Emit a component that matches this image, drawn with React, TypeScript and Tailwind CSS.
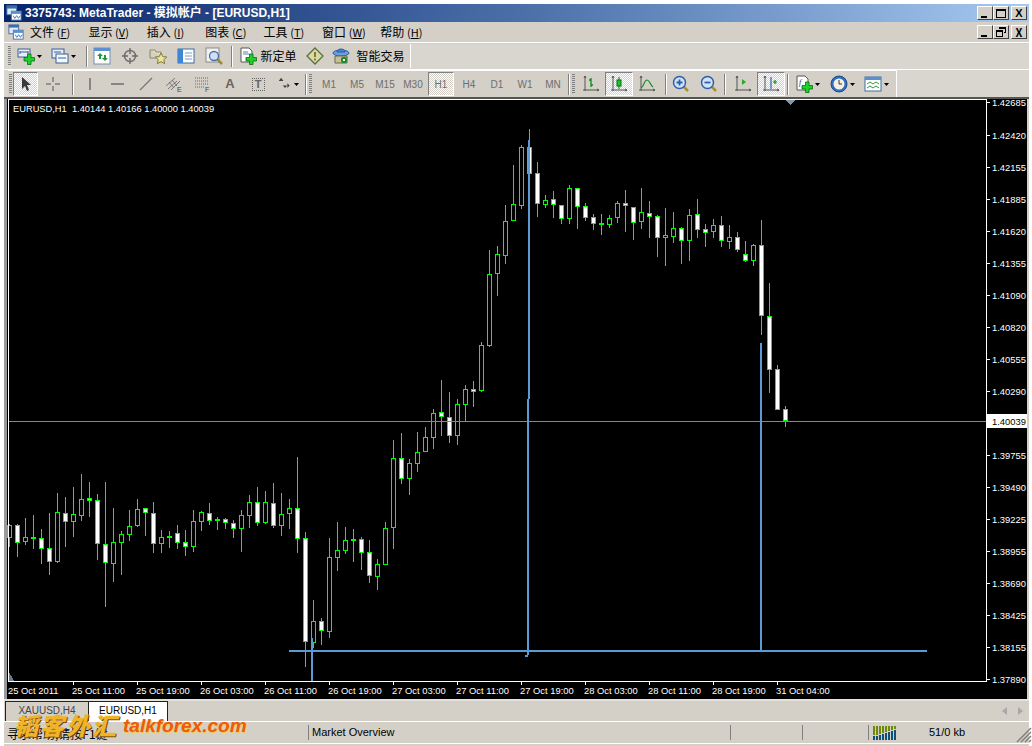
import React from 'react';

// high, body top, body bottom, low, white body
type Candle = [number, number, number, number, number];

const candles: Candle[] = [
  [524, 525, 538, 547, 0], [524, 525, 543, 557, 1], [518, 537, 542, 545, 0], [515, 537, 539, 549, 1],
  [529, 538, 549, 564, 1], [513, 548, 562, 575, 1], [493, 512, 562, 563, 0], [497, 513, 522, 547, 1],
  [487, 514, 522, 537, 0], [474, 499, 516, 521, 0], [482, 498, 501, 517, 1], [494, 500, 544, 560, 1],
  [482, 544, 563, 607, 1], [508, 542, 564, 582, 0], [531, 534, 543, 575, 0], [510, 526, 535, 541, 0],
  [499, 509, 526, 527, 0], [508, 508, 513, 536, 1], [502, 513, 544, 553, 1], [530, 537, 544, 553, 0],
  [531, 536, 537, 548, 1], [525, 533, 543, 549, 1], [530, 542, 547, 556, 1], [510, 521, 547, 552, 0],
  [511, 512, 522, 531, 0], [503, 513, 521, 525, 1], [517, 519, 521, 530, 1], [518, 519, 523, 529, 1],
  [520, 523, 529, 538, 1], [510, 515, 529, 552, 0], [495, 502, 516, 528, 0], [487, 502, 523, 526, 1],
  [491, 502, 523, 524, 0], [483, 503, 526, 528, 1], [493, 514, 526, 536, 0], [499, 508, 514, 529, 0],
  [457, 508, 539, 553, 1], [532, 538, 642, 667, 1], [600, 621, 643, 648, 0], [618, 621, 631, 645, 1],
  [538, 557, 632, 638, 0], [522, 550, 558, 571, 0], [527, 540, 551, 554, 0], [529, 539, 541, 562, 1],
  [537, 539, 553, 570, 1], [540, 552, 576, 583, 1], [559, 564, 577, 590, 0], [522, 528, 565, 565, 0],
  [440, 458, 528, 549, 0], [433, 458, 479, 484, 1], [459, 463, 479, 495, 0], [432, 452, 464, 472, 0],
  [427, 437, 452, 452, 0], [409, 413, 438, 449, 0], [380, 412, 417, 436, 1], [392, 417, 436, 443, 1],
  [399, 404, 436, 445, 0], [385, 389, 405, 421, 0], [381, 389, 392, 407, 1], [342, 345, 391, 392, 0],
  [250, 274, 346, 347, 0], [246, 254, 274, 296, 0], [205, 221, 256, 264, 0], [165, 204, 221, 221, 0],
  [145, 147, 206, 209, 0], [129, 147, 174, 174, 1], [162, 173, 204, 217, 1], [195, 200, 205, 208, 0],
  [191, 199, 205, 218, 1], [205, 205, 219, 224, 1], [185, 188, 219, 224, 0], [188, 188, 207, 229, 1],
  [203, 206, 218, 221, 1], [214, 217, 224, 230, 1], [214, 223, 225, 235, 1], [215, 218, 225, 228, 0],
  [201, 203, 218, 223, 0], [190, 203, 206, 232, 1], [207, 207, 223, 240, 1], [188, 212, 222, 229, 0],
  [201, 213, 217, 238, 1], [215, 216, 238, 257, 1], [208, 235, 238, 266, 0], [212, 228, 237, 243, 0],
  [227, 228, 241, 264, 1], [209, 215, 241, 261, 0], [199, 214, 230, 238, 1], [224, 229, 233, 247, 1],
  [219, 225, 232, 238, 0], [216, 225, 241, 247, 1], [225, 237, 242, 249, 0], [232, 237, 250, 252, 1],
  [241, 254, 261, 262, 1], [244, 245, 261, 266, 0], [220, 245, 316, 335, 1], [283, 316, 370, 393, 1],
  [365, 369, 410, 410, 1], [406, 409, 421, 427, 1],
];

const prices: [string, number][] = [
  ['1.42685', 102], ['1.42420', 135], ['1.42155', 167], ['1.41885', 199], ['1.41620', 231], ['1.41355', 263],
  ['1.41090', 295], ['1.40820', 327], ['1.40555', 359], ['1.40290', 391], ['1.39755', 455], ['1.39490', 487],
  ['1.39225', 519], ['1.38955', 551], ['1.38690', 583], ['1.38425', 615], ['1.38155', 647], ['1.37890', 679],
];

const times = [
  '25 Oct 2011', '25 Oct 11:00', '25 Oct 19:00', '26 Oct 03:00', '26 Oct 11:00', '26 Oct 19:00', '27 Oct 03:00',
  '27 Oct 11:00', '27 Oct 19:00', '28 Oct 03:00', '28 Oct 11:00', '28 Oct 19:00', '31 Oct 04:00',
];

const menus = [
  ['文件', 'F'], ['显示', 'V'], ['插入', 'I'], ['图表', 'C'], ['工具', 'T'], ['窗口', 'W'], ['帮助', 'H'],
];

const GREEN = '#00ff00';
const BLUE = '#5b9bd5';

const Ico: React.FC<{ children: React.ReactNode; size?: number }> = ({ children, size = 18 }) => (
  <svg width={size} height={size} viewBox="0 0 18 18" fill="none" className="shrink-0">
    {children}
  </svg>
);

const Caret = () => (
  <svg width="5" height="3" viewBox="0 0 5 3" className="ml-[2px] shrink-0">
    <path d="M0 0h5L2.5 3z" fill="#000" />
  </svg>
);

const Plus = ({ x = 7, y = 7 }: { x?: number; y?: number }) => (
  <path
    d={`M${x + 3.5} ${y}h3.5v3.500h3.500v3.500h-3.500v3.500h-3.500v-3.500h-3.500v-3.500h3.500z`}
    fill="#1fd02a"
    stroke="#0b6b12"
    strokeWidth="0.8"
  />
);

const Grip = () => (
  <div className="mx-[1px] h-[20px] w-[3px] shrink-0 bg-[repeating-linear-gradient(to_bottom,#808080_0,#808080_1px,transparent_1px,transparent_2px)]" />
);

const Sep = ({ className = '' }: { className?: string }) => (
  <div className={`h-[21px] w-[2px] shrink-0 border-l border-r border-l-[#808080] border-r-white ${className}`} />
);

const Btn: React.FC<{ w: string; pressed?: boolean; children: React.ReactNode }> = ({ w, pressed, children }) => (
  <div
    className={`flex h-[24px] shrink-0 items-center justify-center ${w} ${
      pressed
        ? 'border border-t-[#808080] border-l-[#808080] border-r-white border-b-white bg-[repeating-conic-gradient(#ffffff_0_25%,#d4d0c8_0_50%)] bg-size-[2px_2px]'
        : ''
    }`}
  >
    {children}
  </div>
);

const WinBtn: React.FC<{ children: React.ReactNode }> = ({ children }) => (
  <div className="flex h-[14px] w-[16px] items-center justify-center border border-t-white border-l-white border-r-[#404040] border-b-[#404040] bg-[#d4d0c8]">
    {children}
  </div>
);

const MtLogo = () => (
  <Ico size={16}>
    <rect x="1" y="1" width="11" height="10" fill="#dfeafa" stroke="#3a6ea5" />
    <rect x="1" y="1" width="11" height="3" fill="#3a6ea5" />
    <rect x="6" y="7" width="11" height="10" fill="#fff" stroke="#3a6ea5" />
    <rect x="6" y="7" width="11" height="3" fill="#5c8fd0" />
    <path d="M8 12l2 3 2-3 2 3 2-3" stroke="#3a6ea5" />
  </Ico>
);

const Axes = ({ children }: { children?: React.ReactNode }) => (
  <Ico>
    <path d="M3 1v15M1 15h16M3 1l-1 2M3 1l1 2M17 15l-2-1M17 15l-2 1" stroke="#555" />
    {children}
  </Ico>
);

const Lens = ({ minus }: { minus?: boolean }) => (
  <Ico>
    <path d="M11 11l5 5" stroke="#a89030" strokeWidth="2.5" />
    <circle cx="7.5" cy="7.5" r="6" fill="#cfe2f8" stroke="#2f5fa8" strokeWidth="1.5" />
    <path d={minus ? 'M4.5 7.5h6' : 'M4.5 7.5h6M7.5 4.5v6'} stroke="#2f5fa8" strokeWidth="1.8" />
  </Ico>
);

const label = 'text-[10px] text-[#6e6e6e]';
const chartFont = "'Liberation Sans', sans-serif";

const Chart = () => (
  <svg width="1025" height="600" viewBox="4 99 1025 600" className="block shrink-0" shapeRendering="crispEdges">
    <rect x="4" y="99" width="1023" height="600" fill="#000" />
    <rect x="4" y="99" width="3" height="600" fill="#9a9a9a" />
    <rect x="1027" y="99" width="2" height="600" fill="#d4d0c8" />
    {candles.map(([h, t, b, l, white], i) => {
      const x = 9 + 8 * i;
      return (
        <g key={i}>
          <rect x={x} y={h} width="1" height={l - h} fill={GREEN} />
          <rect x={x - 2} y={t} width="5" height={Math.max(b - t, 2)} fill={GREEN} />
          {b - t > 2 && <rect x={x - 1} y={t + 1} width="3" height={b - t - 2} fill={white ? '#fff' : '#000'} />}
        </g>
      );
    })}
    <rect x="8" y="421" width="978" height="1" fill="#7d8a96" />
    <rect x="528" y="140" width="2" height="259" fill={BLUE} />
    <rect x="527" y="399" width="2" height="256" fill={BLUE} />
    <rect x="525" y="655" width="3" height="2" fill={BLUE} />
    <rect x="760" y="343" width="2" height="308" fill={BLUE} />
    <rect x="289" y="650" width="638" height="2" fill={BLUE} />
    <rect x="311" y="638" width="2" height="43" fill={BLUE} />
    <path d="M785 100h10l-5 5z" fill="#8595a5" />
    <path d="M8 670v11h6z" fill="#6c7884" />
    {/* frame */}
    <rect x="8" y="99" width="979" height="1" fill="#fff" />
    <rect x="8" y="99" width="1" height="583" fill="#fff" />
    <rect x="8" y="681" width="979" height="1" fill="#fff" />
    <rect x="986" y="99" width="1" height="583" fill="#fff" />
    {prices.map(([p, y]) => (
      <g key={p}>
        <rect x="987" y={y} width="3" height="1" fill="#fff" />
        <text x="992" y={y + 4} fill="#fff" fontSize="9.4" fontFamily={chartFont}>
          {p}
        </text>
      </g>
    ))}
    <rect x="987" y="414" width="40" height="14" fill="#fff" />
    <text x="992" y="425" fill="#000" fontSize="9.4" fontFamily={chartFont}>
      1.40039
    </text>
    {times.map((t, i) => (
      <g key={t}>
        {i > 0 && <rect x={9 + 64 * i} y="682" width="1" height="3" fill="#fff" />}
        <text x={8 + 64 * i} y="694" fill="#fff" fontSize="9.4" fontFamily={chartFont}>
          {t}
        </text>
      </g>
    ))}
    <text x="13" y="112" fill="#fff" fontSize="9.3" fontFamily={chartFont} xmlSpace="preserve">
      EURUSD,H1  1.40144 1.40166 1.40000 1.40039
    </text>
  </svg>
);

const NetBars = () => (
  <svg width="24" height="14" viewBox="0 0 24 14" className="shrink-0" shapeRendering="crispEdges">
    {[9, 9, 8, 7, 6, 5, 4, 3].map((h, i) => (
      <g key={i}>
        <rect x={i * 3} y="0" width="2" height={h} fill="#6f8a0a" />
        <rect x={i * 3} y={h + 1} width="2" height={13 - h} fill="#0f4f78" />
      </g>
    ))}
  </svg>
);

export default function App() {
  return (
    <div className="relative flex h-[746px] w-[1032px] flex-col overflow-hidden bg-white pl-1 pr-[3px] pt-1 font-['Liberation_Sans',sans-serif] text-black">
      {/* title bar */}
      <div className="flex h-[18px] items-center bg-linear-to-r from-[#0a246a] via-[#4a6fa8] to-[#a6caf0] px-[2px]">
        <MtLogo />
        <span className="ml-[3px] font-['Liberation_Sans','Noto_Sans_CJK_SC',sans-serif] text-[12px] font-bold text-white">
          3375743: MetaTrader - 模拟帐户 - [EURUSD,H1]
        </span>
        <div className="ml-auto flex">
          <WinBtn><div className="mt-[7px] mr-[3px] h-[2px] w-[6px] bg-black" /></WinBtn>
          <WinBtn><div className="h-[9px] w-[10px] border border-t-2 border-black" /></WinBtn>
          <div className="ml-[2px]">
            <WinBtn><span className="text-[11px] leading-none font-bold">X</span></WinBtn>
          </div>
        </div>
      </div>

      {/* menu */}
      <div className="flex h-[20px] items-center bg-[#d4d0c8] pl-[4px] pr-[2px] font-['Noto_Sans_CJK_SC',sans-serif] text-[12px]">
        <MtLogo />
        <div className="ml-[6px] flex">
          {menus.map(([name, key]) => (
            <div key={key} className="w-[58.4px] whitespace-nowrap">
              {name} <span className="text-[11px]">(<span className="underline">{key}</span>)</span>
            </div>
          ))}
        </div>
        <div className="ml-auto flex">
          <WinBtn><div className="mt-[7px] mr-[3px] h-[2px] w-[6px] bg-black" /></WinBtn>
          <WinBtn>
            <svg width="10" height="10" viewBox="0 0 10 10" shapeRendering="crispEdges">
              <path d="M3 .5h6.5v5H8M.5 3h6v6h-6zM.5 4h6M3 1.500h6.500" stroke="#000" fill="none" />
            </svg>
          </WinBtn>
          <div className="ml-[2px]">
            <WinBtn><span className="text-[11px] leading-none font-bold">X</span></WinBtn>
          </div>
        </div>
      </div>
      <div className="h-[2px] border-t border-white bg-[#d4d0c8]" />

      {/* toolbar 1 */}
      <div className="flex h-[24px] items-center bg-[#d9d6cf] pl-[3px]">
        <Grip />
        <div className="flex h-[24px] w-[399px] items-center border-r border-white bg-[#d4d0c8]">
          <Btn w="w-[33px] ml-[1px]">
            <Ico>
              <rect x="1" y="2" width="12" height="8" fill="#e6effa" stroke="#3a5f95" />
              <path d="M3 5h8M3 4v3M11 4v3" stroke="#3a5f95" />
              <Plus />
            </Ico>
            <Caret />
          </Btn>
          <Btn w="w-[33px] ml-[1px]">
            <Ico>
              <rect x="1" y="2" width="12" height="9" fill="#e6effa" stroke="#3a5f95" />
              <rect x="5" y="7" width="12" height="9" fill="#f4f8fd" stroke="#3a5f95" />
              <path d="M7 11h8M3 5h7" stroke="#3a5f95" />
            </Ico>
            <Caret />
          </Btn>
          <Sep className="ml-[6px]" />
          <Btn w="w-[28px]">
            <Ico>
              <rect x="1" y="1" width="16" height="16" fill="#fff" stroke="#6f8fb5" />
              <rect x="1" y="1" width="16" height="3" fill="#5c8fd0" />
              <path d="M5 6l3 3H6v3H4V9H2zM10 14l-3-3h2V8h2v3h2z" fill="#1e9a38" transform="translate(2 0)" />
            </Ico>
          </Btn>
          <Btn w="w-[28px]">
            <Ico>
              <circle cx="9" cy="9" r="5.5" stroke="#6b6b6b" strokeWidth="1.4" />
              <path d="M9 1v6M9 11v6M1 9h6M11 9h6" stroke="#6b6b6b" strokeWidth="1.4" />
            </Ico>
          </Btn>
          <Btn w="w-[28px]">
            <Ico>
              <path d="M1 3h5l1 2h5v3" stroke="#8a8a5a" fill="#efe8b0" />
              <path d="M1 3v8h6" stroke="#8a8a5a" />
              <path d="M12 6l1.800 3.600 4 .4-3 2.700.8 4-3.600-2-3.600 2 .8-4-3-2.700 4-.4z" fill="#efe39a" stroke="#7a7a3a" />
            </Ico>
          </Btn>
          <Btn w="w-[28px]">
            <Ico>
              <rect x="1" y="2" width="16" height="14" fill="#fff" stroke="#3a6ea5" />
              <rect x="1" y="2" width="5" height="14" fill="#3f86d6" />
              <path d="M8 6h7M8 9h7M8 12h7" stroke="#7d9cc0" />
            </Ico>
          </Btn>
          <Btn w="w-[28px]">
            <Ico>
              <rect x="1" y="1" width="13" height="14" fill="#f2f2f2" stroke="#8a8a8a" />
              <path d="M12 12l5 5" stroke="#a08a2e" strokeWidth="2.500" />
              <circle cx="9" cy="9" r="4.500" fill="#cfe0f5" stroke="#4a6ea8" strokeWidth="1.300" />
            </Ico>
          </Btn>
          <Sep className="ml-[3px]" />
          <Btn w="w-[66px] ml-[2px]">
            <Ico>
              <path d="M2 1h8l3 3v11H2z" fill="#fff" stroke="#555" />
              <path d="M4 5h5M4 7h6" stroke="#5c7fb0" />
              <Plus />
            </Ico>
            <span className="ml-[3px] font-['Noto_Sans_CJK_SC',sans-serif] text-[12px] whitespace-nowrap">新定单</span>
          </Btn>
          <Btn w="w-[28px]">
            <Ico>
              <path d="M9 1l8 8-8 8-8-8z" fill="#dcd9a8" stroke="#56703a" strokeWidth="1.300" />
              <path d="M9 5v5M9 11.500v2" stroke="#6a5a10" strokeWidth="1.500" />
            </Ico>
          </Btn>
          <Btn w="w-[79px]">
            <Ico>
              <ellipse cx="9" cy="6" rx="8" ry="3" fill="#6d9fe0" stroke="#2e5a9e" />
              <path d="M5 5c0-4 8-4 8 0z" fill="#4a82d0" stroke="#2e5a9e" />
              <path d="M3 9h12v7H3z" fill="#c4c098" stroke="#6a6a4a" />
              <rect x="9" y="10" width="6" height="6" rx="2" fill="#1f8a2a" />
              <rect x="11" y="12" width="2" height="2" fill="#fff" />
            </Ico>
            <span className="ml-[6px] font-['Noto_Sans_CJK_SC',sans-serif] text-[12px] whitespace-nowrap">智能交易</span>
          </Btn>
        </div>
      </div>
      <div className="h-[2px] border-b border-white bg-[#d9d6cf]" />

      {/* toolbar 2 */}
      <div className="flex h-[27px] items-center bg-[#d9d6cf] pl-[4px]">
        <div className="flex h-[27px] w-[889px] items-center border-t border-r border-white bg-[#d4d0c8]">
          <Grip />
          <Btn w="w-[25px]" pressed>
            <svg width="12" height="16" viewBox="0 0 12 16">
              <path d="M2 1v12l3-3 2 5 2-1-2-5h4z" fill="#3a3a3a" />
            </svg>
          </Btn>
          <Btn w="w-[28px] ml-[1px]">
            <Ico><path d="M9 2v5M9 11v5M2 9h5M11 9h5" stroke="#555" /></Ico>
          </Btn>
          <Sep className="ml-[5px] mr-[2px]" />
          <Btn w="w-[28px]"><Ico><path d="M9 3v12" stroke="#555" strokeWidth="1.200" /></Ico></Btn>
          <Btn w="w-[28px]"><Ico><path d="M2 9h13" stroke="#555" strokeWidth="1.200" /></Ico></Btn>
          <Btn w="w-[28px]"><Ico><path d="M3 15L15 3" stroke="#777" strokeWidth="1.200" /></Ico></Btn>
          <Btn w="w-[28px]">
            <Ico>
              <path d="M1 11l9-8M3 14l9-8M6 15l9-9M4 7l5 6M7 5l5 6" stroke="#666" strokeWidth="0.800" />
              <text x="12" y="17" fontSize="7" fill="#444" fontFamily={chartFont}>E</text>
            </Ico>
          </Btn>
          <Btn w="w-[28px]">
            <Ico>
              <path d="M2 3h13M2 6h13M2 9h13M2 12h10" stroke="#666" strokeDasharray="1 1" />
              <text x="12" y="17" fontSize="7" fill="#444" fontFamily={chartFont}>F</text>
            </Ico>
          </Btn>
          <Btn w="w-[28px]"><span className="text-[13px] font-bold text-[#666]">A</span></Btn>
          <Btn w="w-[28px]">
            <div className="flex h-[13px] w-[13px] items-center justify-center border border-dotted border-[#666] text-[11px] leading-none font-bold text-[#666]">T</div>
          </Btn>
          <Btn w="w-[33px]">
            <Ico size={14}>
              <path d="M1 5l3-4 3 4zM4 5v3M9 14l-3-3h6zM12 8l3 3-3 3z" fill="#444" />
            </Ico>
            <Caret />
          </Btn>
          <Sep className="mr-[1px]" />
          <Grip />
          <div className="ml-[2px] flex items-center">
            {['M1', 'M5', 'M15', 'M30', 'H1', 'H4', 'D1', 'W1', 'MN'].map((t) => (
              <Btn key={t} w={t === 'H1' ? 'w-[26px] mx-px' : 'w-[28px]'} pressed={t === 'H1'}>
                <span className={label}>{t}</span>
              </Btn>
            ))}
          </div>
          <Sep className="ml-[1px] mr-[1px]" />
          <Grip />
          <Btn w="w-[28px] ml-[1px]">
            <Axes><path d="M9 3v9M9 5H7M9 10h2" stroke="#0a8a1a" strokeWidth="1.300" /></Axes>
          </Btn>
          <Btn w="w-[28px]" pressed>
            <Axes>
              <path d="M9 2v12" stroke="#0a6a14" />
              <rect x="7" y="5" width="4" height="6" fill="#0fd020" stroke="#0a6a14" />
            </Axes>
          </Btn>
          <Btn w="w-[28px]">
            <Axes><path d="M3 13c3-1 3-8 6-8s3 5 6 7" stroke="#1a8a2a" strokeWidth="1.200" /></Axes>
          </Btn>
          <Sep className="ml-[4px]" />
          <Btn w="w-[28px]"><Lens /></Btn>
          <Btn w="w-[28px]"><Lens minus /></Btn>
          <Sep className="ml-[1px] mr-[3px]" />
          <Btn w="w-[28px]">
            <Axes><path d="M8 4l4 3-4 3z" fill="#2aa82a" /></Axes>
          </Btn>
          <Btn w="w-[28px]" pressed>
            <Axes>
              <path d="M9 2v12" stroke="#2f5fa8" strokeWidth="1.200" />
              <path d="M11 7h4M13 5v4" stroke="#1a8a2a" strokeWidth="1.200" />
            </Axes>
          </Btn>
          <Sep className="ml-[2px] mr-[1px]" />
          <Btn w="w-[35px]">
            <Ico>
              <path d="M2 1h8l3 3v11H2z" fill="#fff" stroke="#555" />
              <text x="4" y="10" fontSize="8" fontStyle="italic" fill="#333" fontFamily="'Liberation Serif', serif">f</text>
              <Plus />
            </Ico>
            <Caret />
          </Btn>
          <Btn w="w-[35px]">
            <Ico>
              <circle cx="9" cy="9" r="8" fill="#2f6fc0" stroke="#1e4a8a" />
              <circle cx="9" cy="9" r="5.500" fill="#f4f1e4" />
              <path d="M9 5v4h3" stroke="#333" />
            </Ico>
            <Caret />
          </Btn>
          <Btn w="w-[33px]">
            <Ico>
              <rect x="1" y="2" width="16" height="14" fill="#fff" stroke="#3a6ea5" />
              <rect x="1" y="2" width="16" height="3" fill="#5c8fd0" />
              <path d="M3 9l3-2 3 2 3-2 3 2M3 13l3-2 3 2 3-2 3 2" stroke="#3a9a3a" />
            </Ico>
            <Caret />
          </Btn>
        </div>
      </div>
      <div className="h-[2px] bg-[#555]" />

      {/* chart */}
      <Chart />
      <div className="h-[2px] bg-[#e4e2dc]" />

      {/* tabs */}
      <div className="flex h-[20px] items-stretch bg-[#d4d0c8] pl-[1px] text-[10px]">
        <div className="flex w-[84px] items-start justify-center border-t border-l border-r border-[#222] bg-[#d4d0c8] pt-[1px] text-[#444]">XAUUSD,H4</div>
        <div className="flex w-[79px] items-start justify-center border-t border-r border-[#222] bg-white pt-[1px]">EURUSD,H1</div>
        <div className="ml-auto flex items-center gap-[11px] pr-[6px]">
          <svg width="5" height="8" viewBox="0 0 5 8"><path d="M5 0v8L0 4z" fill="#a8a8a8" /></svg>
          <svg width="5" height="8" viewBox="0 0 5 8"><path d="M0 0v8l5-4z" fill="#a8a8a8" /></svg>
        </div>
      </div>
      <div className="h-[1px] bg-white" />

      {/* status bar */}
      <div className="flex h-[21px] items-center bg-[#d4d0c8] text-[11px]">
        <div className="w-[304px] pl-[3px] pt-[2px] font-['Noto_Sans_CJK_SC',sans-serif] text-[12px] whitespace-nowrap">寻求帮助,请按F1键</div>
        <div className="flex h-[15px] w-[422px] items-center border-l border-[#808080] pl-[3px]">Market Overview</div>
        <div className="h-[15px] w-[72px] border-l border-[#808080]" />
        <div className="h-[15px] w-[66px] border-l border-[#808080]" />
        <div className="flex h-[15px] flex-1 items-center border-l border-[#808080] pl-[4px]">
          <NetBars />
          <span className="ml-[32px]">51/0 kb</span>
        </div>
      </div>
      <div className="h-[1px] bg-white" />
      <div className="h-[2px] bg-[#d4d0c8]" />

      {/* resize grip */}
      <svg width="16" height="16" viewBox="0 0 16 16" className="absolute right-0 bottom-[3px]">
        <path d="M15 1L1 15M15 5L5 15M15 9L9 15M15 13l-2 2" stroke="#808080" strokeWidth="1.500" />
      </svg>

      {/* watermark */}
      <div className="pointer-events-none absolute left-[14px] top-[713px] flex items-center whitespace-nowrap">
        <span className="font-['Noto_Sans_CJK_SC',sans-serif] text-[24px] leading-none font-black tracking-[2px] text-[#f0b428] italic [text-shadow:1px_1px_0_#7a4a08]">
          韬客外汇
        </span>
        <span className="ml-[5px] font-['Liberation_Sans',sans-serif] text-[19px] leading-none font-bold text-[#ee5a10] italic [text-shadow:1px_1px_0_#f5c842]">
          talkforex.com
        </span>
      </div>
    </div>
  );
}
